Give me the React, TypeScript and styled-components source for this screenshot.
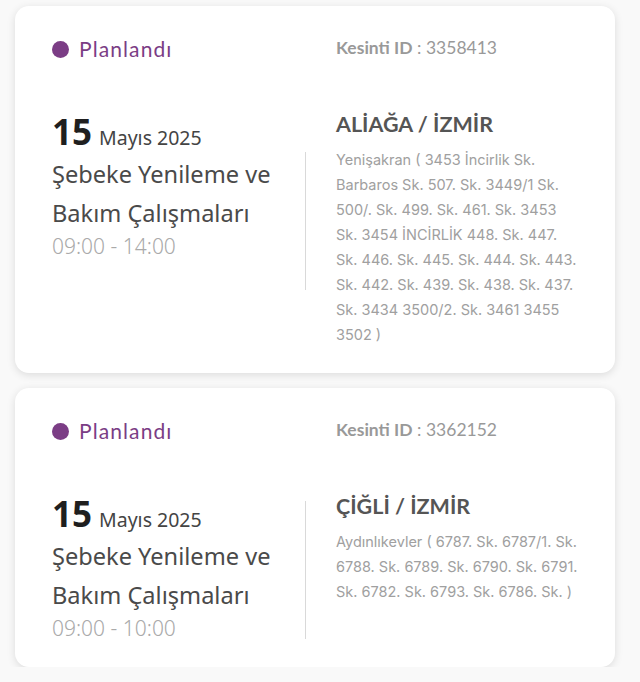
import styled, { createGlobalStyle } from 'styled-components';

type Outage = {
    id: string;
    day: string;
    monthYear: string;
    title: string;
    time: string;
    place: string;
    streets: string;
    dividerOffset: number;
};

const outages: Outage[] = [
    {
        id: '3358413',
        day: '15',
        monthYear: 'Mayıs 2025',
        title: 'Şebeke Yenileme ve Bakım Çalışmaları',
        time: '09:00 - 14:00',
        place: 'ALİAĞA / İZMİR',
        streets: 'Yenişakran ( 3453 İncirlik Sk. Barbaros Sk. 507. Sk. 3449/1 Sk. 500/. Sk. 499. Sk. 461. Sk. 3453 Sk. 3454 İNCİRLİK 448. Sk. 447. Sk. 446. Sk. 445. Sk. 444. Sk. 443. Sk. 442. Sk. 439. Sk. 438. Sk. 437. Sk. 3434 3500/2. Sk. 3461 3455 3502 )',
        dividerOffset: 41,
    },
    {
        id: '3362152',
        day: '15',
        monthYear: 'Mayıs 2025',
        title: 'Şebeke Yenileme ve Bakım Çalışmaları',
        time: '09:00 - 10:00',
        place: 'ÇİĞLİ / İZMİR',
        streets: 'Aydınlıkevler ( 6787. Sk. 6787/1. Sk. 6788. Sk. 6789. Sk. 6790. Sk. 6791. Sk. 6782. Sk. 6793. Sk. 6786. Sk. )',
        dividerOffset: 8,
    },
];

export default function App() {
    return (
        <>
            <GlobalStyle />
            <List>
                {outages.map((o) => (
                    <Card key={o.id}>
                        <Header>
                            <Status>
                                <Dot />
                                Planlandı
                            </Status>
                            <OutageId>
                                <b>Kesinti ID</b> : {o.id}
                            </OutageId>
                        </Header>
                        <Body>
                            <Left>
                                <DateLine>
                                    <Day>{o.day}</Day>
                                    <MonthYear>{o.monthYear}</MonthYear>
                                </DateLine>
                                <Title>{o.title}</Title>
                                <Time>{o.time}</Time>
                            </Left>
                            <Divider $offset={o.dividerOffset} />
                            <Right>
                                <Place>{o.place}</Place>
                                <Streets>{o.streets}</Streets>
                            </Right>
                        </Body>
                    </Card>
                ))}
            </List>
        </>
    );
}

const GlobalStyle = createGlobalStyle`
  body {
    margin: 0;
    background: #f9f9f9;
    font-family: 'Lato', sans-serif;
  }
`;

const List = styled.div`
  width: 600px;
  padding: 6px 0 0 15px;
  display: flex;
  flex-direction: column;
  gap: 15px;
`;

const Card = styled.div`
  background: #fff;
  border-radius: 14px;
  box-shadow: 0 2px 8px rgba(0, 0, 0, 0.12);
  padding: 31px 35px 26px 37px;
`;

const Header = styled.div`
  display: grid;
  grid-template-columns: 284px 1fr;
  align-items: center;
`;

const Status = styled.div`
  display: flex;
  align-items: center;
  gap: 10px;
  color: #7b3d85;
  font-family: 'Lato', sans-serif;
  font-size: 21px;
  letter-spacing: 1.1px;
  line-height: 24px;
`;

const Dot = styled.span`
  width: 17px;
  height: 17px;
  border-radius: 50%;
  background: #7b3d85;
`;

const OutageId = styled.div`
  color: #999;
  font-size: 17.5px;
  margin-top: -4px;
  b {
    font-weight: 700;
  }
`;

const Body = styled.div`
  display: flex;
  margin-top: 50px;
`;

const Left = styled.div`
  width: 253px;
  font-family: 'Noto Sans', sans-serif;
`;

const DateLine = styled.div`
  display: flex;
  align-items: baseline;
  gap: 7px;
  line-height: 40px;
  padding-top: 1px;
`;

const Day = styled.span`
  font-size: 35px;
  font-weight: 700;
  color: #1f1f1f;
`;

const MonthYear = styled.span`
  font-size: 19.5px;
  color: #444;
`;

const Title = styled.div`
  font-size: 23.6px;
  line-height: 39px;
  margin-top: -3px;
  color: #4a4a4a;
`;

const Time = styled.div`
  font-size: 21px;
  line-height: 26px;
  color: #aaa;
  font-weight: 300;
`;

const Divider = styled.div<{ $offset: number }>`
  width: 1px;
  height: 138px;
  background: #d9d9d9;
  margin-top: ${(p) => p.$offset}px;
  margin-right: 30px;
  flex-shrink: 0;
`;

const Right = styled.div`
  flex: 1;
`;

const Place = styled.div`
  font-size: 21.5px;
  font-weight: 700;
  color: #555;
  line-height: 30px;
  margin-top: -2px;
`;

const Streets = styled.div`
  margin-top: 8px;
  font-family: 'Inter', sans-serif;
  font-size: 14.5px;
  line-height: 25px;
  color: #a0a0a0;
`;
